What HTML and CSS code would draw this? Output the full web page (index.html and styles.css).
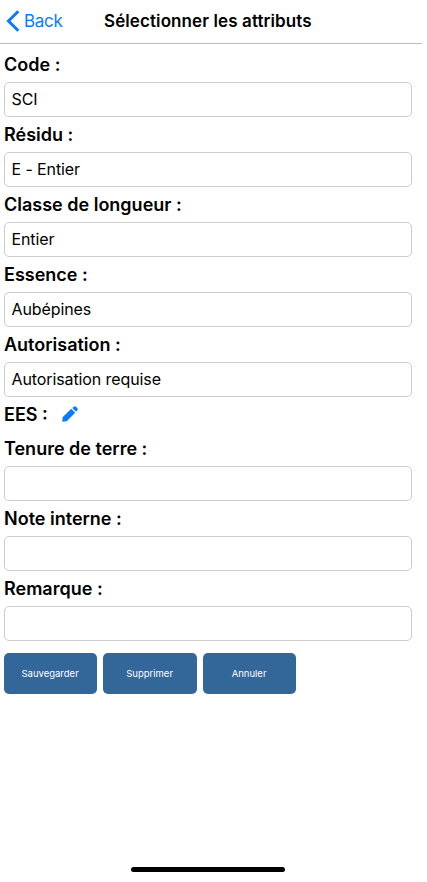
FILE: index.html
```html
<!DOCTYPE html>
<html lang="fr">
<head>
    <meta charset="UTF-8">
    <meta name="viewport" content="width=device-width, initial-scale=1.0">
    <title>Sélectionner les attributs</title>
    <link rel="stylesheet" href="styles.css">
</head>
<body>
    <div class="screen">
        <!-- Barre de navigation -->
        <header class="navbar">
            <a href="#" class="back">
                <svg class="back-icon" viewBox="0 0 14 22" width="14" height="22">
                    <path d="M12.3 1.2 L2.5 11 L12.3 20.8" fill="none" stroke="#0a7aff" stroke-width="3"/>
                </svg>
                <span>Back</span>
            </a>
            <h1 class="title">Sélectionner les attributs</h1>
        </header>

        <!-- Formulaire -->
        <main class="form">
            <label class="label" for="code">Code :</label>
            <div class="field" id="code">SCI</div>

            <label class="label" for="residu">Résidu :</label>
            <div class="field" id="residu">E - Entier</div>

            <label class="label" for="classe">Classe de longueur :</label>
            <div class="field" id="classe">Entier</div>

            <label class="label" for="essence">Essence :</label>
            <div class="field" id="essence">Aubépines</div>

            <label class="label" for="autorisation">Autorisation :</label>
            <div class="field" id="autorisation">Autorisation requise</div>

            <div class="label label-edit">
                <span>EES :</span>
                <svg class="edit-icon" viewBox="0 0 16 16" width="16" height="16">
                    <path d="M0.3 15.7 L0.6 11.2 L9.2 2.8 L13.2 6.8 L4.7 15.3 Z M10.3 1.9 L11.7 0.7 Q12.8 -0.2 13.9 0.7 L15.3 2.1 Q16.2 3.2 15.3 4.3 L14.1 5.7 Z" fill="#0a7aff"/>
                </svg>
            </div>

            <label class="label" for="tenure">Tenure de terre :</label>
            <div class="field" id="tenure"></div>

            <label class="label" for="note">Note interne :</label>
            <div class="field" id="note"></div>

            <label class="label" for="remarque">Remarque :</label>
            <div class="field" id="remarque"></div>

            <div class="buttons">
                <button class="btn">Sauvegarder</button>
                <button class="btn">Supprimer</button>
                <button class="btn">Annuler</button>
            </div>
        </main>

        <div class="home-bar"></div>
    </div>
</body>
</html>
```
FILE: styles.css
```css
* {
    box-sizing: border-box;
}

body {
    margin: 0;
    background-color: #fff;
    color: #000;
    font-family: Inter, "Liberation Sans", sans-serif;
}

.screen {
    display: flex;
    flex-direction: column;
    width: 422px;
    height: 872px;
}

/* Barre de navigation */
.navbar {
    display: flex;
    align-items: center;
    height: 44px;
    padding: 0 0 2px 6px;
    border-bottom: 1px solid #bcbcbc;
}

.back {
    display: flex;
    align-items: center;
    gap: 4px;
    width: 98px;
    color: #0a7aff;
    font-size: 17px;
    letter-spacing: -0.3px;
    text-decoration: none;
}

.title {
    margin: 0;
    font-size: 17px;
    font-weight: 600;
    letter-spacing: 0.1px;
    white-space: nowrap;
}

/* Champs */
.form {
    flex: 1;
    padding: 3px 10px 0 4px;
}

.label {
    display: flex;
    align-items: center;
    height: 35px;
    font-size: 18px;
    font-weight: 600;
}

.label-edit {
    height: 34px;
}

.edit-icon {
    margin-left: 14px;
}

.field {
    display: flex;
    align-items: center;
    height: 35px;
    padding: 0 6.5px 2px;
    border: 1px solid #ccc;
    border-radius: 5px;
    font-size: 16px;
    letter-spacing: -0.1px;
}

/* Boutons */
.buttons {
    display: flex;
    gap: 6.3px;
    margin-top: 12px;
}

.btn {
    width: 93.2px;
    height: 41px;
    padding: 0 1px 0 0;
    border: none;
    border-radius: 5px;
    background-color: #336699;
    color: #fff;
    font-family: inherit;
    font-size: 9.5px;
}

.home-bar {
    align-self: center;
    width: 154px;
    height: 5px;
    margin-left: -6px;
    border-radius: 3px;
    background-color: #000;
}
```
